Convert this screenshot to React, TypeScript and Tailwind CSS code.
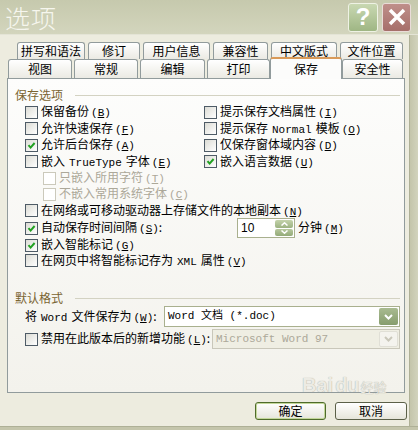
import React from "react";

const cjk = "font-['Noto_Sans_CJK_SC',sans-serif]";
const mono = "font-['Liberation_Mono','Noto_Sans_CJK_SC',monospace]";

function Lat({ children }: { children: React.ReactNode }) {
  return <span className={`${mono} text-[11px] mx-[4px]`}>{children}</span>;
}

function Key({ k }: { k: string }) {
  return (
    <span className={`${mono} text-[11px] ml-[2px]`}>
      (<u>{k}</u>)
    </span>
  );
}

function Box({ checked, disabled }: { checked?: boolean; disabled?: boolean }) {
  return (
    <span
      className={
        "w-[13px] h-[13px] border flex items-center justify-center shrink-0 " +
        (disabled
          ? "border-[#cbc9bb] bg-white"
          : "border-[#4e5b66] bg-linear-to-br from-[#dcdcd5] to-white")
      }
    >
      {checked && (
        <svg width="9" height="9" viewBox="0 0 9 9">
          <path d="M1.5 4.2 L3.6 6.6 L7.6 2" fill="none" stroke="#21a121" strokeWidth="2" />
        </svg>
      )}
    </span>
  );
}

function Row({
  h,
  checked,
  disabled,
  indent,
  children,
}: {
  h: string;
  checked?: boolean;
  disabled?: boolean;
  indent?: boolean;
  children: React.ReactNode;
}) {
  return (
    <div className={`flex items-center ${h} ${indent ? "pl-[18px]" : ""}`}>
      <Box checked={checked} disabled={disabled} />
      <span className={`ml-[3px] whitespace-nowrap ${disabled ? "text-[#aca899]" : "text-black"}`}>
        {children}
      </span>
    </div>
  );
}

function Tab({ w, label }: { w: string; label: string }) {
  return (
    <div
      className={`${w} h-full rounded-t-[3px] border border-b-0 border-[#919b9c] bg-linear-to-b from-white to-[#ebeae3] flex items-center justify-center text-[12px] whitespace-nowrap`}
    >
      {label}
    </div>
  );
}

function GroupHead({ label }: { label: string }) {
  return (
    <div className="flex items-center h-[14px] pl-[7px] pr-[4px]">
      <span className="text-[#7a6431] text-[12px]">{label}</span>
      <div className="flex-1 ml-[12px] h-px bg-[#d3d2c2]" />
    </div>
  );
}

function Chevron({ color }: { color: string }) {
  return (
    <svg width="9" height="6" viewBox="0 0 9 6">
      <path d="M1 1 L4.5 4.5 L8 1" fill="none" stroke={color} strokeWidth="2" />
    </svg>
  );
}

export default function App() {
  return (
    <div className={`w-[418px] h-[430px] flex flex-col bg-[#c9cab2] ${cjk} text-[12px] overflow-hidden`}>
      {/* title bar */}
      <div className="h-[35px] shrink-0 flex items-center bg-linear-to-b from-[#c6c9ad] to-[#d3d5bd] border-b border-[#e4e4d6]">
        <span className="pl-[5px] text-[25px] leading-none text-[#f6f6ee] tracking-[1px] font-light">选项</span>
        <div className="ml-auto flex gap-[4px] pr-[7px]">
          <div className="w-[30px] h-[29px] rounded-[3px] border border-[#eef2e4] bg-linear-to-b from-[#c9d8b2] to-[#9fb684] flex items-center justify-center text-white text-[24px] font-bold font-['Liberation_Sans',sans-serif] leading-none">
            ?
          </div>
          <div className="w-[29px] h-[29px] rounded-[3px] border border-[#e9dcd8] bg-linear-to-b from-[#bf8f8a] to-[#a66f6a] flex items-center justify-center">
            <svg width="20" height="20" viewBox="0 0 20 20">
              <path d="M3 3 L17 17 M17 3 L3 17" stroke="white" strokeWidth="3.5" />
            </svg>
          </div>
        </div>
      </div>

      <div className="flex-1 flex">
        <div className="flex-1 bg-[#edecdf] border-r border-[#aeb096] flex flex-col">
          {/* tabs */}
          <div className="mt-[7px] h-[17px] flex pl-[17px] gap-[3px]">
            <Tab w="w-[68px]" label="拼写和语法" />
            <Tab w="w-[52px]" label="修订" />
            <Tab w="w-[67px]" label="用户信息" />
            <Tab w="w-[55px]" label="兼容性" />
            <Tab w="w-[66px]" label="中文版式" />
            <Tab w="w-[63px]" label="文件位置" />
          </div>
          <div className="h-[19px] flex items-end pl-[8px] relative z-10">
            <div className="h-[19px] flex gap-[2px]">
              <Tab w="w-[64px]" label="视图" />
              <Tab w="w-[64px]" label="常规" />
              <Tab w="w-[65px]" label="编辑" />
              <Tab w="w-[63px]" label="打印" />
            </div>
            <div className="w-[72px] h-[22px] -mb-px rounded-t-[3px] border border-b-0 border-[#919b9c] border-t-2 border-t-[#d99a58] bg-[#fcfcfb] flex items-center justify-center text-[12px]">
              保存
            </div>
            <div className="h-[19px] flex">
              <Tab w="w-[61px]" label="安全性" />
            </div>
          </div>

          {/* panel */}
          <div className="ml-[7px] w-[398px] h-[315px] border border-[#919b9c] bg-linear-to-b from-[#fdfdfc] to-[#f3f2ec] flex flex-col">
            <div className="mt-[9px]">
              <GroupHead label="保存选项" />
            </div>
            <div className="mt-[2px] pl-[17px] grid grid-cols-[179px_1fr]">
              <Row h="h-[16px]">
                保留备份<Key k="B" />
              </Row>
              <Row h="h-[16px]">
                提示保存文档属性<Key k="I" />
              </Row>
              <Row h="h-[17px]">
                允许快速保存<Key k="F" />
              </Row>
              <Row h="h-[17px]">
                提示保存<Lat>Normal</Lat>模板<Key k="O" />
              </Row>
              <Row h="h-[16px]" checked>
                允许后台保存<Key k="A" />
              </Row>
              <Row h="h-[16px]">
                仅保存窗体域内容<Key k="D" />
              </Row>
              <Row h="h-[17px]">
                嵌入<Lat>TrueType</Lat>字体<Key k="E" />
              </Row>
              <Row h="h-[17px]" checked>
                嵌入语言数据<Key k="U" />
              </Row>
            </div>
            <div className="pl-[17px] flex flex-col">
              <Row h="h-[16px]" disabled indent>
                只嵌入所用字符<Key k="T" />
              </Row>
              <Row h="h-[16px]" disabled indent>
                不嵌入常用系统字体<Key k="C" />
              </Row>
              <Row h="h-[17px]">
                在网络或可移动驱动器上存储文件的本地副本<Key k="N" />
              </Row>
              <div className="flex items-center h-[18px]">
                <Box checked />
                <span className="ml-[3px] w-[196px] whitespace-nowrap">
                  自动保存时间间隔<Key k="S" />:
                </span>
                <div className="w-[58px] h-[20px] border border-[#a9b08e] bg-white flex items-center">
                  <span className="pl-[3px] flex-1 font-['Liberation_Sans',sans-serif] text-[12px]">10</span>
                  <div className="w-[18px] h-[16px] mr-px flex flex-col gap-px">
                    <div className="flex-1 rounded-[2px] bg-linear-to-b from-[#c4d3ab] to-[#9cb281] flex items-center justify-center">
                      <svg width="7" height="4" viewBox="0 0 7 4">
                        <path d="M0.5 3.5 L3.5 0.8 L6.5 3.5" fill="none" stroke="white" strokeWidth="1.5" />
                      </svg>
                    </div>
                    <div className="flex-1 rounded-[2px] bg-linear-to-b from-[#b7c89d] to-[#93aa78] flex items-center justify-center">
                      <svg width="7" height="4" viewBox="0 0 7 4">
                        <path d="M0.5 0.5 L3.5 3.2 L6.5 0.5" fill="none" stroke="white" strokeWidth="1.5" />
                      </svg>
                    </div>
                  </div>
                </div>
                <span className="ml-[3px]">
                  分钟<Key k="M" />
                </span>
              </div>
              <Row h="h-[16px]" checked>
                嵌入智能标记<Key k="G" />
              </Row>
              <Row h="h-[15px]">
                在网页中将智能标记存为<Lat>XML</Lat>属性<Key k="V" />
              </Row>
            </div>

            <div className="mt-[23px]">
              <GroupHead label="默认格式" />
            </div>
            <div className="mt-[1px] pl-[17px] pr-[4px] flex items-center h-[21px]">
              <span className="w-[139px] whitespace-nowrap">
                将<Lat>Word</Lat>文件保存为<Key k="W" />:
              </span>
              <div className="flex-1 h-[21px] border border-[#a9b08e] bg-white flex items-center">
                <span className={`pl-[3px] flex-1 ${mono} text-[11px] whitespace-nowrap`}>Word 文档 (*.doc)</span>
                <div className="w-[19px] h-[17px] mr-px rounded-[2px] bg-linear-to-b from-[#a9bb91] to-[#879d6d] flex items-center justify-center">
                  <Chevron color="white" />
                </div>
              </div>
            </div>
            <div className="mt-[2px] pl-[17px] pr-[4px] flex items-center h-[20px]">
              <Box />
              <span className="ml-[3px] w-[171px] whitespace-nowrap">
                禁用在此版本后的新增功能<Key k="L" />:
              </span>
              <div className="flex-1 h-[20px] border border-[#c9c7ba] bg-[#efeee3] flex items-center">
                <span className={`pl-[3px] flex-1 ${mono} text-[11px] text-[#aca899] whitespace-nowrap`}>
                  Microsoft Word 97
                </span>
                <div className="w-[19px] h-[16px] mr-px rounded-[2px] bg-[#f4f3ee] border border-[#e0dfd6] flex items-center justify-center">
                  <Chevron color="#c9c7ba" />
                </div>
              </div>
            </div>
          </div>

          {/* buttons */}
          <div className="mt-[9px] flex pl-[255px] gap-[9px] relative">
            <div className="w-[71px] h-[18px] rounded-[3px] border border-[#4f6b2a] bg-linear-to-b from-white to-[#e6e5da] flex items-center justify-center ring-1 ring-inset ring-[#c3d79a]">
              确定
            </div>
            <div className="w-[72px] h-[18px] rounded-[3px] border border-[#5b6048] bg-linear-to-b from-white to-[#e6e5da] flex items-center justify-center">
              取消
            </div>
            <div className="absolute left-[302px] top-[-27px] w-[90px] text-[20px] font-bold font-['Liberation_Sans',sans-serif] text-[#ecebe4] [text-shadow:0_0_1px_#9c9c92] leading-none pointer-events-none whitespace-nowrap">
              Bai<span className="ml-[2px]">du</span>
              <span className={`${cjk} text-[13px] font-normal ml-[1px]`}>经验</span>
            </div>
          </div>
        </div>
        <div className="w-[8px] bg-linear-to-r from-[#c4c5ab] to-[#d2d3bd]" />
      </div>
      <div className="h-[4px] bg-[#c4c5ab] border-t border-[#aeb096]" />
    </div>
  );
}
